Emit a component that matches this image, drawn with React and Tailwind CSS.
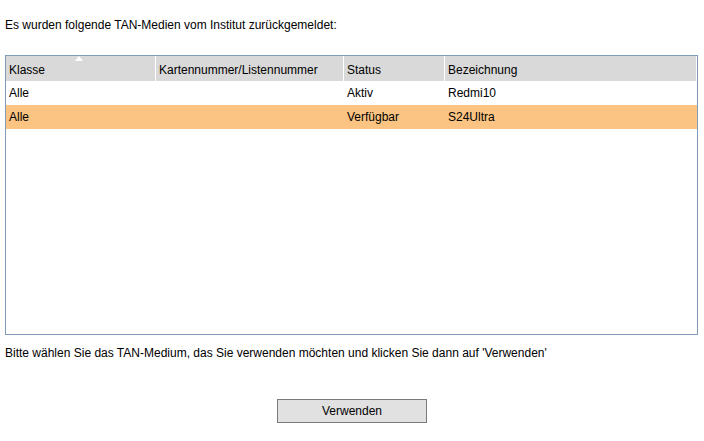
import React from "react";

const rows = [
  { k: "Alle", n: "", s: "Aktiv", b: "Redmi10", sel: false },
  { k: "Alle", n: "", s: "Verfügbar", b: "S24Ultra", sel: true },
];

export default function App() {
  return (
    <div className="w-[704px] h-[441px] bg-white text-black text-[12px] leading-[14px] font-['Liberation_Sans',Arial,sans-serif] overflow-hidden">
      <div className="pt-[18px] pl-[5px]">Es wurden folgende TAN-Medien vom Institut zurückgemeldet:</div>
      <div className="mt-[23px] ml-[5px] w-[693px] h-[280px] border border-[#7f9db9] bg-white">
        <div className="relative grid grid-cols-[149px_188px_101px_1fr] h-[25px] bg-[#d9d9d9] mr-[1px]">
          <div className="pl-[3px] flex items-center pt-[3px]">Klasse</div>
          <div className="pl-[3px] flex items-center pt-[3px] border-l border-white">Kartennummer/Listennummer</div>
          <div className="pl-[3px] flex items-center pt-[3px] border-l border-white">Status</div>
          <div className="pl-[3px] flex items-center pt-[3px] border-l border-white">Bezeichnung</div>
          <div className="absolute left-[69px] top-[0px] w-0 h-0 border-l-[4px] border-r-[4px] border-b-[5px] border-l-transparent border-r-transparent border-b-white" />
        </div>
        {rows.map((r, i) => (
          <div
            key={i}
            className={`grid grid-cols-[149px_188px_101px_1fr] h-[24px] ${r.sel ? "bg-[#fbc483]" : "bg-white"}`}
          >
            <div className="pl-[3px] flex items-center">{r.k}</div>
            <div className="pl-[4px] flex items-center">{r.n}</div>
            <div className="pl-[4px] flex items-center">{r.s}</div>
            <div className="pl-[4px] flex items-center">{r.b}</div>
          </div>
        ))}
      </div>
      <div className="mt-[11px] pl-[5px]">Bitte wählen Sie das TAN-Medium, das Sie verwenden möchten und klicken Sie dann auf 'Verwenden'</div>
      <div className="mt-[39px] flex justify-center">
        <button className="w-[150px] h-[24px] bg-[#e1e1e1] border border-[#7a7a7a] text-[12px] text-black flex items-center justify-center">
          Verwenden
        </button>
      </div>
    </div>
  );
}
